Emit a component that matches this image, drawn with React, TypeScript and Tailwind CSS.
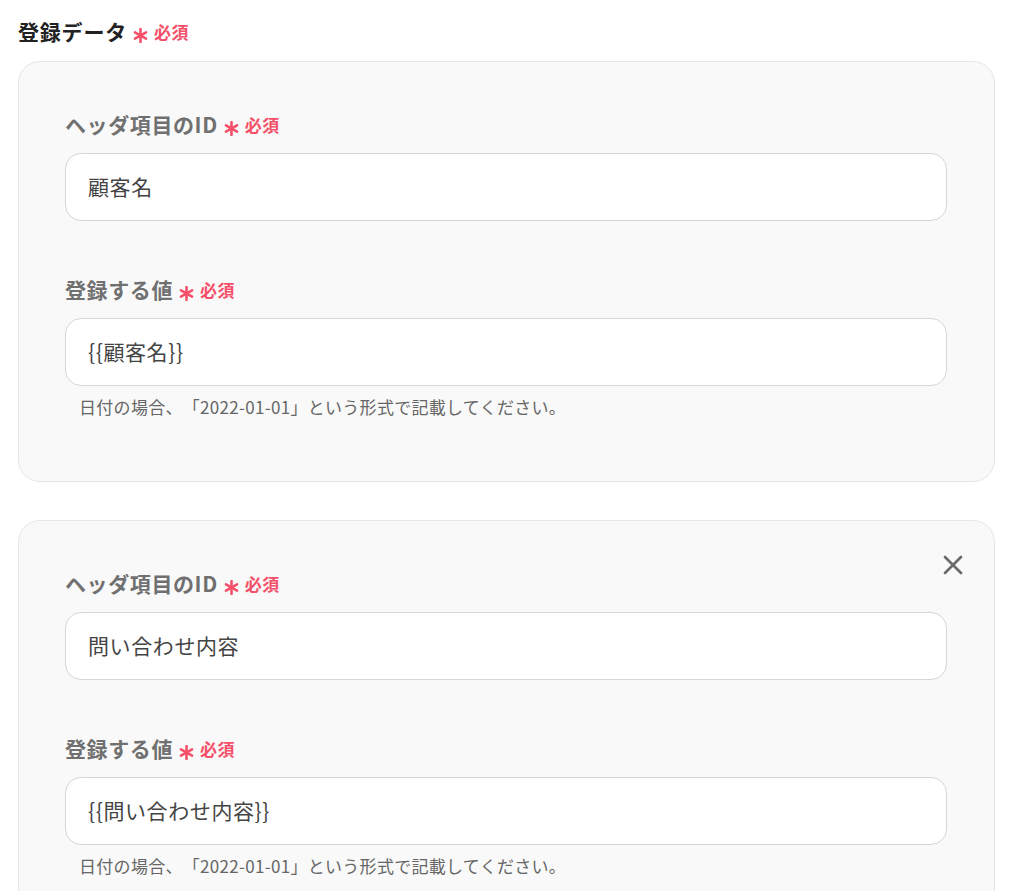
import { X } from "lucide-react";

type Field = { id: string; value: string };

const fields: Field[] = [
  { id: "顧客名", value: "{{顧客名}}" },
  { id: "問い合わせ内容", value: "{{問い合わせ内容}}" },
];

function Asterisk() {
  return (
    <svg viewBox="0 0 14 14" className="h-[15px] w-[15px] translate-y-[3px]" aria-hidden>
      <g stroke="currentColor" strokeWidth="2.4" strokeLinecap="round">
        <line x1="7" y1="1" x2="7" y2="13" />
        <line x1="1.8" y1="4" x2="12.2" y2="10" />
        <line x1="1.8" y1="10" x2="12.2" y2="4" />
      </g>
    </svg>
  );
}

function Required() {
  return (
    <span className="ml-[6px] inline-flex items-center gap-[6px] text-[#f5506a]">
      <Asterisk />
      <span className="text-[17px] font-bold tracking-[0.6px]">必須</span>
    </span>
  );
}

function Label({ children }: { children: string }) {
  return (
    <div className="flex h-[28px] items-center text-[21px] font-bold tracking-[0.6px] text-[#707070]">
      {children}
      <Required />
    </div>
  );
}

function TextBox({ value }: { value: string }) {
  return (
    <div className="mt-[14px] flex h-[68px] items-center rounded-[16px] border border-[#d3d6dd] bg-white px-[22px] text-[21px] tracking-[0.6px] text-[#444]">
      {value}
    </div>
  );
}

function FieldCard({ field, removable }: { field: Field; removable: boolean }) {
  return (
    <section className="relative rounded-[22px] border border-[#e6e6e6] bg-[#f9f9f9] pb-[62px] pl-[46px] pr-[47px] pt-[49px]">
      {removable && (
        <button
          type="button"
          aria-label="削除"
          className="absolute right-[25px] top-[28px] text-[#6b6b6b]"
        >
          <X className="h-[32px] w-[32px]" strokeWidth={2} />
        </button>
      )}
      <Label>ヘッダ項目のID</Label>
      <TextBox value={field.id} />
      <div className="mt-[55px]">
        <Label>登録する値</Label>
      </div>
      <TextBox value={field.value} />
      <p className="mt-[9px] pl-[14px] text-[17px] leading-[24px] tracking-[0.3px] text-[#666] [text-spacing-trim:space-all]">
        日付の場合、「2022-01-01」という形式で記載してください。
      </p>
    </section>
  );
}

export default function App() {
  return (
    <div
      className="min-h-screen bg-white pl-[18px] pr-[26px] pt-[18px]"
      style={{ fontFamily: '"Noto Sans CJK JP", "Noto Sans", sans-serif' }}
    >
      <h2 className="flex h-[28px] items-center text-[21px] font-bold tracking-[0.8px] text-[#222]">
        登録データ
        <Required />
      </h2>
      <div className="mt-[15px] flex flex-col gap-[38px]">
        {fields.map((f, i) => (
          <FieldCard key={f.id} field={f} removable={i > 0} />
        ))}
      </div>
    </div>
  );
}
